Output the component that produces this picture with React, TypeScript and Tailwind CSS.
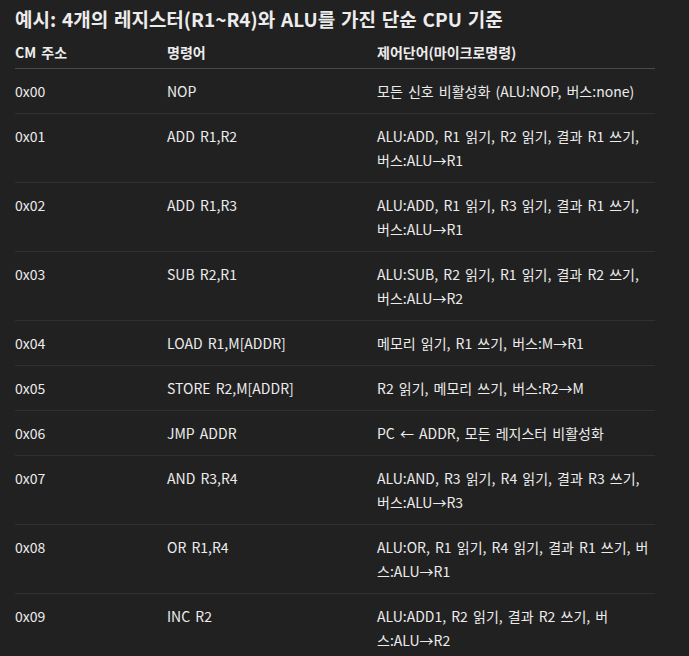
const rows: [string, string, string][] = [
  ['0x00', 'NOP', '모든 신호 비활성화 (ALU:NOP, 버스:none)'],
  ['0x01', 'ADD R1,R2', 'ALU:ADD, R1 읽기, R2 읽기, 결과 R1 쓰기, 버스:ALU→R1'],
  ['0x02', 'ADD R1,R3', 'ALU:ADD, R1 읽기, R3 읽기, 결과 R1 쓰기, 버스:ALU→R1'],
  ['0x03', 'SUB R2,R1', 'ALU:SUB, R2 읽기, R1 읽기, 결과 R2 쓰기, 버스:ALU→R2'],
  ['0x04', 'LOAD R1,M[ADDR]', '메모리 읽기, R1 쓰기, 버스:M→R1'],
  ['0x05', 'STORE R2,M[ADDR]', 'R2 읽기, 메모리 쓰기, 버스:R2→M'],
  ['0x06', 'JMP ADDR', 'PC ← ADDR, 모든 레지스터 비활성화'],
  ['0x07', 'AND R3,R4', 'ALU:AND, R3 읽기, R4 읽기, 결과 R3 쓰기, 버스:ALU→R3'],
  ['0x08', 'OR R1,R4', 'ALU:OR, R1 읽기, R4 읽기, 결과 R1 쓰기, 버스:ALU→R1'],
  ['0x09', 'INC R2', 'ALU:ADD1, R2 읽기, 결과 R2 쓰기, 버스:ALU→R2'],
];

export default function App() {
  return (
    <div
      className="min-h-screen bg-[#212121] text-[#ececec] px-[15px] pt-[5px] [word-spacing:2px]"
      style={{ fontFamily: "'Noto Sans CJK KR', 'Noto Sans', sans-serif" }}
    >
      <h3 className="text-[19px] font-bold leading-[28px] mb-[7px] [word-spacing:1.5px]">
        예시: 4개의 레지스터(R1~R4)와 ALU를 가진 단순 CPU 기준
      </h3>
      <table className="w-[640px] table-fixed border-collapse text-[14px] leading-[24px]">
        <colgroup>
          <col className="w-[152px]" />
          <col className="w-[210px]" />
          <col />
        </colgroup>
        <thead>
          <tr className="border-b border-[#4a4a4a]">
            <th className="text-left font-bold pb-[4px] pr-[8px]">CM 주소</th>
            <th className="text-left font-bold pb-[4px] pr-[8px]">명령어</th>
            <th className="text-left font-bold pb-[4px] pr-[2px]">제어단어(마이크로명령)</th>
          </tr>
        </thead>
        <tbody>
          {rows.map(([addr, ins, ctrl]) => (
            <tr key={addr} className="border-b border-[#303030]">
              <td className="py-[10px] pr-[8px] align-top">{addr}</td>
              <td className="py-[10px] pr-[8px] align-top">{ins}</td>
              <td className="py-[10px] pr-[2px] align-top">{ctrl}</td>
            </tr>
          ))}
        </tbody>
      </table>
    </div>
  );
}
